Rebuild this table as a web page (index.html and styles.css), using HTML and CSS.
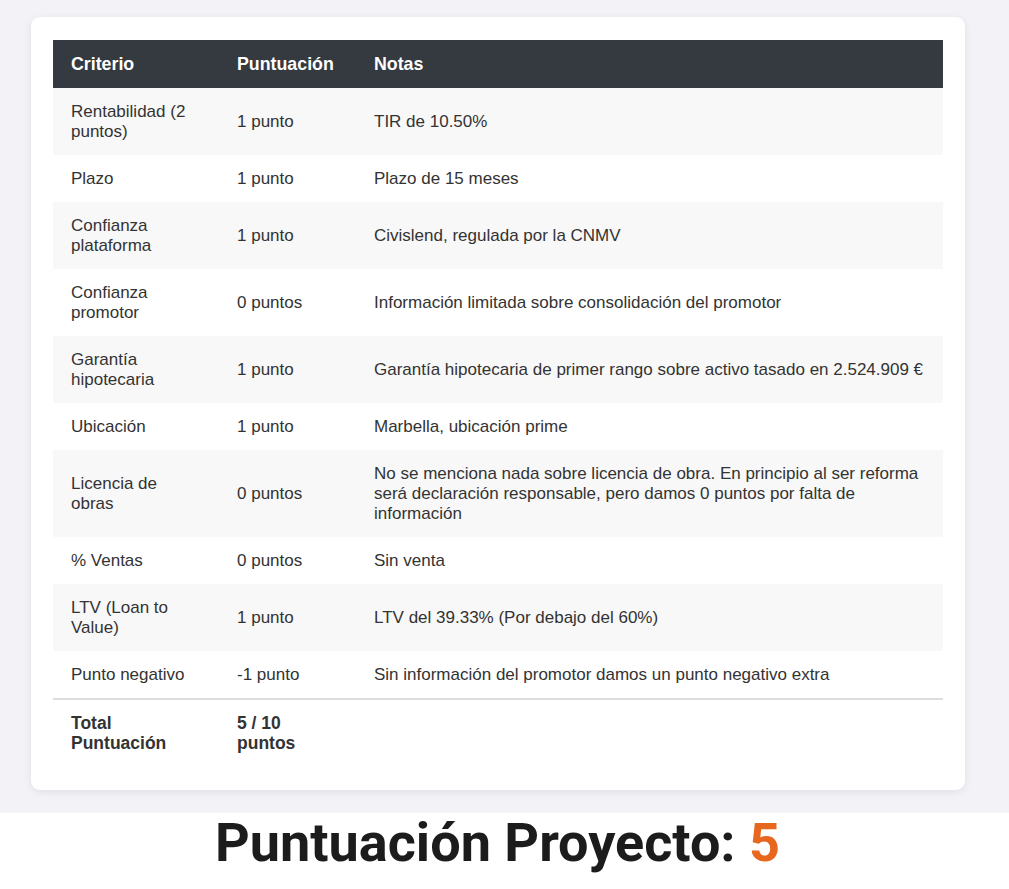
FILE: index.html
```html
<!DOCTYPE html>
<html lang="es">
<head>
<meta charset="utf-8">
<title>Puntuación Proyecto</title>
<link rel="stylesheet" href="styles.css">
</head>
<body>
<section class="band">
  <div class="card">
    <table class="score">
      <colgroup>
        <col class="c1"><col class="c2"><col class="c3">
      </colgroup>
      <thead>
        <tr><th>Criterio</th><th>Puntuación</th><th>Notas</th></tr>
      </thead>
      <tbody>
        <tr><td>Rentabilidad (2 puntos)</td><td>1 punto</td><td>TIR de 10.50%</td></tr>
        <tr><td>Plazo</td><td>1 punto</td><td>Plazo de 15 meses</td></tr>
        <tr><td>Confianza plataforma</td><td>1 punto</td><td>Civislend, regulada por la CNMV</td></tr>
        <tr><td>Confianza promotor</td><td>0 puntos</td><td>Información limitada sobre consolidación del promotor</td></tr>
        <tr><td>Garantía hipotecaria</td><td>1 punto</td><td>Garantía hipotecaria de primer rango sobre activo tasado en 2.524.909 €</td></tr>
        <tr><td>Ubicación</td><td>1 punto</td><td>Marbella, ubicación prime</td></tr>
        <tr><td>Licencia de obras</td><td>0 puntos</td><td>No se menciona nada sobre licencia de obra. En principio al ser reforma será declaración responsable, pero damos 0 puntos por falta de información</td></tr>
        <tr><td>% Ventas</td><td>0 puntos</td><td>Sin venta</td></tr>
        <tr><td>LTV (Loan to Value)</td><td>1 punto</td><td>LTV del 39.33% (Por debajo del 60%)</td></tr>
        <tr><td>Punto negativo</td><td>-1 punto</td><td>Sin información del promotor damos un punto negativo extra</td></tr>
      </tbody>
      <tfoot>
        <tr><td>Total Puntuación</td><td>5 / 10 puntos</td><td></td></tr>
      </tfoot>
    </table>
  </div>
</section>
<h1 class="headline">Puntuación Proyecto: <span class="accent">5</span></h1>
</body>
</html>
```

FILE: styles.css
```css
html, body {
  margin: 0;
  padding: 0;
  background: #ffffff;
}

body {
  font-family: "Liberation Sans", Arial, sans-serif;
  color: #333333;
}

.band {
  background: #f2f2f7;
  padding: 17px 44px 23px 31px;
}

.card {
  background: #ffffff;
  border-radius: 9px;
  box-shadow: 0 2px 8px rgba(0, 0, 0, 0.08);
  padding: 23px 22px 24px 22px;
}

.score {
  width: 100%;
  border-collapse: collapse;
  table-layout: fixed;
  font-size: 17px;
  line-height: 20px;
}

.c1 { width: 166px; }
.c2 { width: 137px; }

.score th {
  background: #343a40;
  color: #ffffff;
  font-size: 17.8px;
  font-weight: bold;
  text-align: left;
  padding: 14px 18px;
  line-height: 20px;
}

.score td {
  padding: 13.5px 18px;
  vertical-align: middle;
  text-align: left;
}

.score tbody tr:nth-child(odd) td {
  background: #f8f8f8;
}

.score tfoot td {
  font-size: 17.5px;
  font-weight: bold;
  border-top: 2px solid #dddddd;
  padding-top: 13px;
  padding-bottom: 13px;
  vertical-align: top;
}

.headline {
  margin: 0;
  padding: 0 14px 0 0;
  text-align: center;
  font-family: Roboto, "Liberation Sans", sans-serif;
  font-weight: bold;
  font-size: 54px;
  line-height: 60px;
  color: #1c1c1c;
}

.accent {
  color: #e8671e;
}
```
